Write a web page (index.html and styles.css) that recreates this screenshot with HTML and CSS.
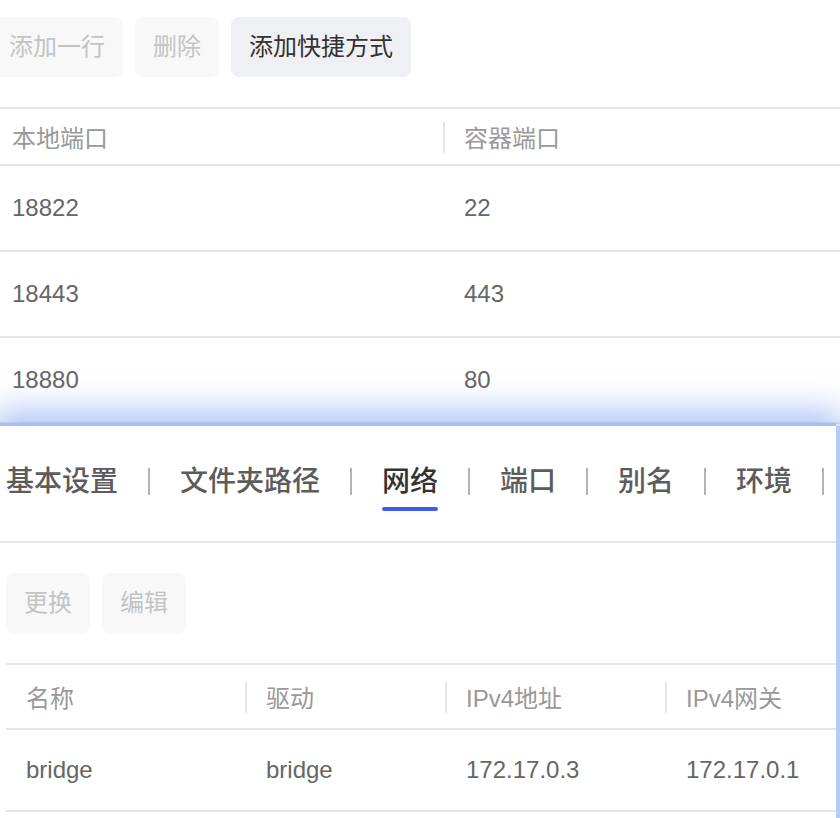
FILE: index.html
```html
<!DOCTYPE html>
<html lang="zh-CN">
<head>
<meta charset="utf-8">
<title>容器设置</title>
<link rel="stylesheet" href="styles.css">
</head>
<body>
<div class="page">
  <section class="ports">
    <div class="toolbar toolbar-top">
      <button class="btn btn-disabled">添加一行</button>
      <button class="btn btn-disabled">删除</button>
      <button class="btn btn-active">添加快捷方式</button>
    </div>
    <div class="ptable">
      <div class="prow phead">
        <div class="pcell">本地端口</div>
        <div class="pcell pcell-2 has-div">容器端口</div>
      </div>
      <div class="prow">
        <div class="pcell">18822</div>
        <div class="pcell pcell-2">22</div>
      </div>
      <div class="prow">
        <div class="pcell">18443</div>
        <div class="pcell pcell-2">443</div>
      </div>
      <div class="prow">
        <div class="pcell">18880</div>
        <div class="pcell pcell-2">80</div>
      </div>
    </div>
  </section>

  <section class="panel">
    <nav class="tabs">
      <div class="tab">基本设置</div><span class="sep"></span>
      <div class="tab">文件夹路径</div><span class="sep"></span>
      <div class="tab tab-active">网络</div><span class="sep"></span>
      <div class="tab">端口</div><span class="sep"></span>
      <div class="tab">别名</div><span class="sep"></span>
      <div class="tab">环境</div><span class="sep"></span>
    </nav>
    <div class="toolbar toolbar-net">
      <button class="btn btn-disabled">更换</button>
      <button class="btn btn-disabled">编辑</button>
    </div>
    <div class="ntable">
      <div class="nrow nhead">
        <div class="ncell">名称</div>
        <div class="ncell has-div">驱动</div>
        <div class="ncell has-div">IPv4地址</div>
        <div class="ncell has-div">IPv4网关</div>
      </div>
      <div class="nrow">
        <div class="ncell">bridge</div>
        <div class="ncell">bridge</div>
        <div class="ncell">172.17.0.3</div>
        <div class="ncell">172.17.0.1</div>
      </div>
    </div>
  </section>
</div>
</body>
</html>
```

FILE: styles.css
```css
html, body {
  margin: 0;
  padding: 0;
  overflow: hidden;
  background: #ffffff;
}

body {
  width: 840px;
  height: 818px;
  font-family: "Liberation Sans", "Noto Sans CJK SC", sans-serif;
  color: #666666;
}

.page {
  width: 840px;
}

/* buttons */
.toolbar {
  display: flex;
  gap: 12px;
}

.toolbar-top {
  padding-top: 17px;
  margin-left: -9px;
}

.btn {
  height: 60px;
  padding: 0 18px;
  border: 0;
  border-radius: 8px;
  font-family: "Liberation Sans", "Noto Sans CJK SC", sans-serif;
  font-size: 24px;
  line-height: 60px;
  white-space: nowrap;
}

.btn-disabled {
  background: #f8f8f9;
  color: #c4c4c4;
}

.btn-active {
  background: #eff0f4;
  color: #333333;
}

/* ports table */
.ptable {
  margin-top: 30px;
  border-top: 2px solid #e6e6e6;
}

.prow {
  display: grid;
  grid-template-columns: 443px 1fr;
  height: 84px;
  border-bottom: 2px solid #e6e6e6;
  font-size: 24px;
  color: #666666;
}

.phead {
  height: 55px;
  color: #999999;
}

.pcell {
  display: flex;
  align-items: center;
  padding-left: 12px;
}

.pcell-2 {
  padding-left: 21px;
}

.has-div {
  position: relative;
}

.has-div::before {
  content: "";
  position: absolute;
  left: 0;
  top: 50%;
  width: 2px;
  height: 31px;
  margin-top: -15px;
  background: #e6e6e6;
}

/* overlay panel */
.panel {
  position: relative;
  width: 836px;
  margin-top: 2px;
  padding-bottom: 40px;
  background: #ffffff;
  box-shadow:
    0 -3px 0 0 #a6c0f3,
    4px 0 0 0 #b4ccf9,
    0 -10px 30px 6px rgba(110, 152, 242, 0.55);
}

.tabs {
  box-sizing: border-box;
  height: 117px;
  padding: 36px 0 0 6px;
  display: flex;
  align-items: flex-start;
  border-bottom: 2px solid #e6e6e6;
}

.tab {
  display: flex;
  flex-direction: column;
  align-items: center;
  font-size: 28px;
  line-height: 40px;
  font-weight: 500;
  color: #5c5c5c;
  white-space: nowrap;
}

.tab-active {
  color: #333333;
}

.tab-active::after {
  content: "";
  display: block;
  width: 100%;
  height: 4px;
  margin-top: 5px;
  border-radius: 2px;
  background: #3f5ef0;
}

.sep {
  flex: none;
  width: 2px;
  height: 27px;
  margin: 6px 30px 0;
  background: #b3b3b3;
}

.toolbar-net {
  padding: 30px 0 0 6px;
}

/* network table */
.ntable {
  margin: 30px 0 0 6px;
  border-top: 2px solid #e6e6e6;
}

.nrow {
  display: grid;
  grid-template-columns: 239px 200px 220px 1fr;
  height: 80px;
  border-bottom: 2px solid #e6e6e6;
  font-size: 24px;
  color: #666666;
}

.nhead {
  height: 63px;
  color: #999999;
}

.ncell {
  display: flex;
  align-items: center;
  padding-left: 20px;
  white-space: nowrap;
}

.ncell + .ncell {
  padding-left: 21px;
}
```
